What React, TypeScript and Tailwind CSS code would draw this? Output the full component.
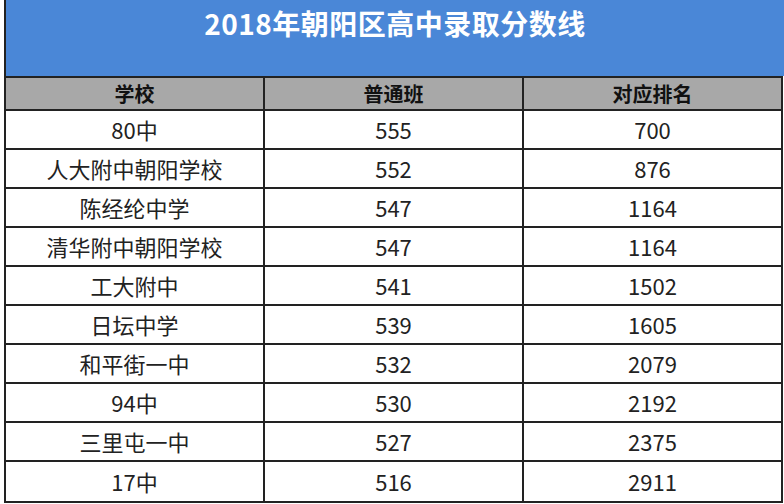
import React from "react";

const rows: [string, string, string][] = [
  ["80中", "555", "700"],
  ["人大附中朝阳学校", "552", "876"],
  ["陈经纶中学", "547", "1164"],
  ["清华附中朝阳学校", "547", "1164"],
  ["工大附中", "541", "1502"],
  ["日坛中学", "539", "1605"],
  ["和平街一中", "532", "2079"],
  ["94中", "530", "2192"],
  ["三里屯一中", "527", "2375"],
  ["17中", "516", "2911"],
];

export default function App() {
  return (
    <div
      className="w-[784px] h-[504px] bg-white pl-[4px] overflow-hidden"
      style={{ fontFamily: '"Noto Sans CJK SC", "Microsoft YaHei", sans-serif' }}
    >
      <div className="h-[76px] bg-[#4a87d7] border-l-2 border-[#222] flex justify-center pt-[4px]">
        <span className="text-white font-bold text-[28px] leading-[38px] tracking-[0.5px]">
          2018年朝阳区高中录取分数线
        </span>
      </div>
      <div className="w-[779px] border-2 border-[#222]">
        <div className="flex h-[33px] bg-[#a8a8a8] border-b-2 border-[#222] text-[20px] font-bold text-[#111]">
          <div className="flex-1 flex items-center justify-center border-r-2 border-[#222]">学校</div>
          <div className="flex-1 flex items-center justify-center border-r-2 border-[#222]">普通班</div>
          <div className="flex-1 flex items-center justify-center">对应排名</div>
        </div>
        {rows.map((r, i) => (
          <div
            key={i}
            className={`flex h-[39px] text-[22px] text-[#222] ${i < rows.length - 1 ? "border-b-2 border-[#222]" : ""}`}
          >
            <div className="flex-1 flex items-center justify-center border-r-2 border-[#222]">{r[0]}</div>
            <div className="flex-1 flex items-center justify-center border-r-2 border-[#222]">{r[1]}</div>
            <div className="flex-1 flex items-center justify-center">{r[2]}</div>
          </div>
        ))}
      </div>
    </div>
  );
}
